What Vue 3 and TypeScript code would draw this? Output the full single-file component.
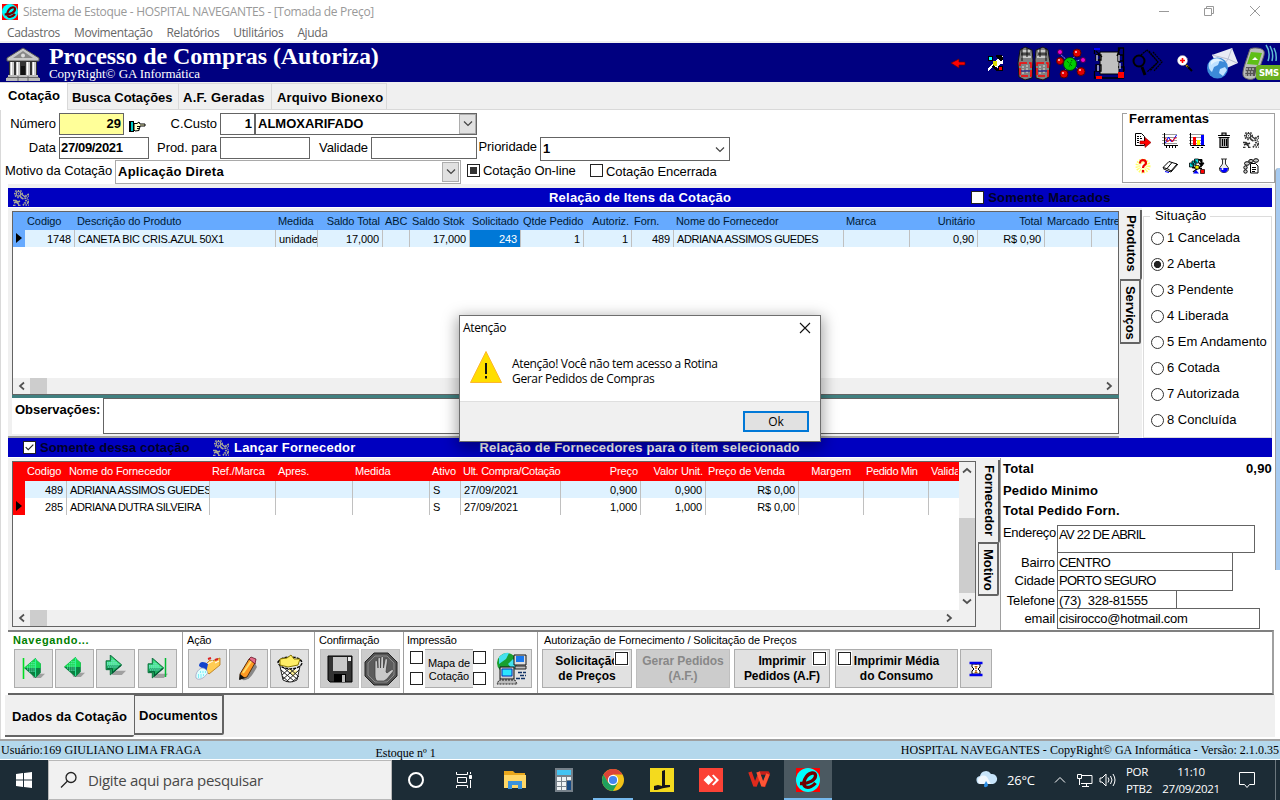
<script setup lang="ts">
interface Column {
  label: string
  values: string[]
  right?: boolean
  headRight?: boolean
  selected?: boolean
}

const menus: string[] = ['Cadastros', 'Movimentação', 'Relatórios', 'Utilitários', 'Ajuda']
const topTabs: string[] = ['Cotação', 'Busca Cotações', 'A.F. Geradas', 'Arquivo Bionexo']

const itemColumns: Column[] = [
  { label: 'Codigo', values: ['1748'], right: true },
  { label: 'Descrição do Produto', values: ['CANETA BIC CRIS.AZUL 50X1'] },
  { label: 'Medida', values: ['unidade'] },
  { label: 'Saldo Total', values: ['17,000'], right: true, headRight: true },
  { label: 'ABC', values: [''] },
  { label: 'Saldo Stok', values: ['17,000'], right: true, headRight: true },
  { label: 'Solicitado', values: ['243'], right: true, headRight: true, selected: true },
  { label: 'Qtde Pedido', values: ['1'], right: true, headRight: true },
  { label: 'Autoriz.', values: ['1'], right: true, headRight: true },
  { label: 'Forn.', values: ['489'], right: true },
  { label: 'Nome do Fornecedor', values: ['ADRIANA ASSIMOS GUEDES'] },
  { label: 'Marca', values: [''] },
  { label: 'Unitário', values: ['0,90'], right: true, headRight: true },
  { label: 'Total', values: ['R$ 0,90'], right: true, headRight: true },
  { label: 'Marcado', values: [''] },
  { label: 'Entre', values: [''] },
]

const supplierColumns: Column[] = [
  { label: 'Codigo', values: ['489', '285'], right: true },
  { label: 'Nome do Fornecedor', values: ['ADRIANA ASSIMOS GUEDES', 'ADRIANA DUTRA SILVEIRA'] },
  { label: 'Ref./Marca', values: ['', ''] },
  { label: 'Apres.', values: ['', ''] },
  { label: 'Medida', values: ['', ''] },
  { label: 'Ativo', values: ['S', 'S'] },
  { label: 'Ult. Compra/Cotação', values: ['27/09/2021', '27/09/2021'] },
  { label: 'Preço', values: ['0,900', '1,000'], right: true, headRight: true },
  { label: 'Valor Unit.', values: ['0,900', '1,000'], right: true, headRight: true },
  { label: 'Preço de Venda', values: ['R$ 0,00', 'R$ 0,00'], right: true },
  { label: 'Margem', values: ['', ''], headRight: true },
  { label: 'Pedido Min', values: ['', ''] },
  { label: 'Valida', values: ['', ''] },
]

const situations: string[] = [
  '1 Cancelada', '2 Aberta', '3 Pendente', '4 Liberada',
  '5 Em Andamento', '6 Cotada', '7 Autorizada', '8 Concluída',
]
const currentSituation = 1
</script>

<template>
  <div class="window">
    <svg class="defs" width="0" height="0">
      <symbol id="gears" viewBox="0 0 16 16">
        <g fill="none" stroke="currentColor">
          <circle cx="5.500" cy="3.800" r="3.700" stroke-width="1.600" stroke-dasharray="1.500 1.200" />
          <circle cx="5.500" cy="3.800" r="2.300" stroke-width="1.200" />
          <circle cx="5.500" cy="3.800" r=".7" fill="currentColor" stroke="none" />
          <path d="M16 4.500c-5 0-5 7.500 0 7.500" stroke-width="1.800" stroke-dasharray="1.600 .900" />
          <path d="M16 6.500c-2.500 0-2.500 3.500 0 3.500" />
          <path d="M9.500 5l3 2M8 7.500l2.500 1.500" stroke-width="1.500" />
          <path d="M0 10.500h3l2 1.500 2-1M1 13l2-1 3 2.500M0 15.500h2.500M5 15.500h2.500" stroke-width="1.500" />
          <path d="M10 15.500l1.500-2.500h3l1.500 2.500M12.500 15h1.500" stroke-width="1.500" stroke-dasharray="1.800 .800" />
        </g>
      </symbol>
      <symbol id="logo-e" viewBox="0 0 24 24">
        <rect width="24" height="24" fill="#f00" />
        <circle cx="12" cy="12" r="12" fill="#0ff" />
        <path fill="none" stroke="#700000" stroke-width="3.400" d="M4 15.500c9 .500 15.500-3.500 15.500-8 0-4-6-3-9 1-3 4-4 9-.500 10.500 3 1 7-1 9.500-4" />
      </symbol>
      <symbol id="arrow-right" viewBox="0 0 20 20">
        <path d="M6 15h14l-4 4H7z" fill="#a0a0a0" />
        <path d="M1 5.500h4V0l11 9.500L5 19v-5H1z" fill="#20b060" stroke="#063" stroke-width=".8" />
        <path d="M6 2l9 7.500H2V6.500h4z" fill="#48e888" />
        <path d="M2 7.500h9M2 9.500h12M6 5.500h3M3 11.500h9" fill="none" stroke="#8de" stroke-dasharray="1 1" />
        <path d="M2 13h5v4l8-7" stroke="#053" fill="none" />
      </symbol>
      <symbol id="arrow-left" viewBox="0 0 20 20">
        <path d="M7 15h13l-4 4H9z" fill="#a0a0a0" />
        <path d="M0 9.500L11 0l1 2 4 3.500V14l-5 5z" fill="#0a8040" />
        <path d="M0 9.500L11 0l1 2 4 3.500v4z" fill="#18d850" />
        <path d="M3 8.500h8M5 6.500h6M7 4.500h4M3 10.500h8M5 12.500h6" stroke="#8fd" stroke-dasharray="1 1" />
        <path d="M11 1v17" stroke="#3fa" stroke-width=".8" />
      </symbol>
    </svg>

    <header class="caption">
      <svg class="app-icon" viewBox="0 0 24 24"><use href="#logo-e" /></svg>
      <span class="caption-text">Sistema de Estoque - HOSPITAL NAVEGANTES - [Tomada de Preço]</span>
      <svg class="controls" width="104" height="12" fill="none" stroke="#999">
        <path d="M1 6.500h10M46.500 3.500h7v7h-7zM48.500 3.500v-2h7v7h-2M92 1l10 10M102 1L92 11" />
      </svg>
    </header>
    <nav class="menu"><span v-for="m in menus" :key="m">{{ m }}</span></nav>

    <section class="banner">
      <svg class="bank" width="34" height="34" viewBox="0 0 34 34">
        <path d="M1 11L17 1l16 10v3H1z" fill="#c8c8c8" stroke="#555" />
        <path d="M7 11l10-7 10 7z" fill="#888" />
        <circle cx="17" cy="8.500" r="2" fill="#ddd" />
        <path d="M3 14h28v15H3z" fill="#333" />
        <path d="M4 15h4v13H4zM10 15h4v13h-4zM20 15h4v13h-4zM26 15h4v13h-4z" fill="#ccc" />
        <path d="M5.500 15v13M11.500 15v13M21.500 15v13M27.500 15v13" stroke="#fff" />
        <path d="M15 19h4v9h-4z" fill="#111" />
        <path d="M2 28h30v2H2zM0 31h34v3H0z" fill="#bbb" />
        <path d="M1 30.500h32M12 29v5M22 29v5" stroke="#666" />
      </svg>
      <div class="titles">
        <h1>Processo de Compras (Autoriza)</h1>
        <p>CopyRight© GA Informática</p>
      </div>
      <svg class="banner-icons" width="332" height="39" viewBox="948 0 332 39">
        <path d="M951 20l8-4v3h6v3h-6v3z" fill="#f00" stroke="#600" stroke-width=".7" />
        <g shape-rendering="crispEdges">
          <path d="M988 28v-3l5-5 4-3 3-4h3v8h-3l-1 3h4v4h-3l-4-4-3-1-4 5z" fill="#fff" />
          <path d="M996 12h6l1 4-2 2-4-3z" fill="#000" />
          <path d="M988 13h5v5h-5z" fill="#000" /><path d="M989 14h3v3h-3z" fill="#0ff" />
          <path d="M993 18h4v5h-4z" fill="#dd0" />
          <path d="M993 22l6 6h-2l-5-4z" fill="#000" />
          <path d="M998 23h5v5h-5z" fill="#000" /><path d="M999 24h3v3h-3z" fill="#f00" />
        </g>
        <g stroke="#111">
          <path d="M1020 7l5-3 7 3 1 10-1 18-7 2-6-3-1-14z" fill="#808080" />
          <path d="M1048 7l-5-3-7 3-1 10 1 18 7 2 6-3 1-14z" fill="#808080" />
          <path d="M1022 8h8M1038 8h8M1021 14h10M1037 14h10" stroke="#c8c8c8" stroke-width="2" />
          <path d="M1022 5v13M1027 5v9M1040 5v9M1046 5v13M1021 11h9M1038 11h9" />
          <path d="M1020 20h11v13h-11zM1037 20h11v13h-11z" fill="none" stroke="#f00" stroke-width="1.500" stroke-dasharray="7 2" />
          <path d="M1023 23v9M1027 22v9M1040 23v9M1044 22v9" stroke="#ddd" stroke-dasharray="2 1" />
          <path d="M1021 28h9M1038 28h9" stroke="#008" />
        </g>
        <path d="M1059 10l11 10 7-10M1060 18l10 2 13-4M1064 30l6-10 11 8" stroke="#aaf" stroke-dasharray="2 1" fill="none" />
        <circle cx="1070" cy="21" r="6.500" fill="#0c0" stroke="#040" />
        <path d="M1067 18l5 5M1072 17l-3 7" stroke="#040" stroke-dasharray="1 1" />
        <g fill="#e00000" stroke="#500">
          <circle cx="1060" cy="18" r="3.500" /><circle cx="1077" cy="10" r="4" />
          <circle cx="1064" cy="31" r="4" /><circle cx="1081" cy="28.500" r="4" />
        </g>
        <g fill="#e0c" stroke="#404"><circle cx="1060" cy="9" r="2.500" /><circle cx="1083" cy="17" r="2.500" /></g>
        <g fill="#fcc"><circle cx="1059" cy="17" r="1" /><circle cx="1076" cy="9" r="1" /><circle cx="1063" cy="30" r="1" /><circle cx="1080" cy="27" r="1" /></g>
        <path d="M1100 9h19v22h-19z" fill="#c0c0c0" stroke="#000" />
        <g fill="none" stroke="#000" stroke-width="1.300">
          <path d="M1094.500 5v6M1094.500 28v7h29V5h-5v6M1096 12h5v5h-5zM1118 12h5v6h-5zM1096 22h5v6h-5zM1118 24h6v4M1096 8l6 6M1120 5l-3 8" />
          <path d="M1097 12v6M1119 12v6M1098 22v6M1120 20v6" stroke="#ccd" />
        </g>
        <path d="M1094 5h6v2h-6z" fill="#00f" /><path d="M1118 29h6v6h-6z" fill="#f00" /><path d="M1096 33h6v3h-6z" fill="#f00" />
        <g fill="none" stroke="#000" stroke-width="2">
          <circle cx="1139" cy="18" r="5.500" /><path d="M1142 24l3 8" stroke-width="3" />
          <path d="M1141 12l6-5 11 12-11 10M1149 8l9 11-8 9M1153 9l9 10-8 9" stroke-width="1.200" stroke-dasharray="2 .600" />
        </g>
        <path d="M1186 22l6 6" stroke="#000" stroke-width="2" />
        <path d="M1185 21l3 3" stroke="#fc0" stroke-width="2" stroke-dasharray="1 1" />
        <circle cx="1182.500" cy="17.500" r="5" fill="#fff" stroke="#99a" stroke-dasharray="1 1" />
        <path d="M1180 17.500h5M1182.500 15v5" stroke="#f00" stroke-width="1.600" />
        <path d="M1212 12l20-7 6 15-18 8z" fill="#e8ebf4" />
        <path d="M1212 12l16 4 4-11M1219 28l9-12 9 4" fill="none" stroke="#b8bfd2" />
        <circle cx="1217.500" cy="25" r="10.500" fill="#3c8ad8" />
        <path d="M1209 20c3-5 8-5 11-3l-2 5-4 2-2 5c-3-2-4-5-3-9zM1220 26l5-2 2 3-4 6-4-3z" fill="#bfe2ff" />
        <path d="M1211 18c5-5 11-2 13 1-5-2-9-1-13 3z" fill="#eaf7ff" opacity=".8" />
        <path d="M1250 6c4-2 11-1 13 1 3 2 0 8-2 14l-4 11c-2 6-10 5-13 2-2-2-1-7 1-13z" fill="#b9bdb9" stroke="#666" />
        <path d="M1251 9l11 1-4 12-11-1z" fill="#5fbf18" />
        <path d="M1252 17l3-3 3 3z" fill="#fff" />
        <path d="M1246 24h11l-2 9-10 0z" fill="#555" />
        <path d="M1246 26h9M1245 29h9M1245 32h9" stroke="#ddd" stroke-dasharray="2 1" />
        <path d="M1266 2q5 7 2 16M1270 3q4 7 2 15M1274 5q3 6 2 13" stroke="#60bcd4" fill="none" stroke-width="1.500" />
        <rect x="1256" y="22" width="26" height="15" rx="3" fill="#69b020" />
        <text x="1259" y="33" class="sms">SMS</text>
      </svg>
    </section>

    <nav class="top-tabs">
      <span v-for="(t, i) in topTabs" :key="t" :class="{ active: i === 0 }">{{ t }}</span>
    </nav>

    <main class="page">
      <div class="content">
        <section class="form">
          <div class="fields">
            <div class="row row1">
              <label>Número</label>
              <div class="box yellow num">29</div>
              <svg width="17" height="11" viewBox="0 0 17 11" class="hand">
                <path d="M0 0h5v11H0z" fill="#000" /><path d="M2 1h2v9H2z" fill="#0cc" />
                <path d="M5 2.500h3l2-1.500 1 2h5v2h-5v1.500h-.500v1.500h-.500v1.500L6 10 5 9z" fill="#ffc" stroke="#000" /><path d="M8 5.500h3M8 7.500h2.500" stroke="#000" />
              </svg>
              <label>C.Custo</label>
              <div class="box num">1</div>
              <div class="box combo"><b>ALMOXARIFADO</b><i class="drop"><svg viewBox="0 0 10 6"><path d="M1 .500l4 4 4-4" /></svg></i></div>
            </div>
            <div class="row row2">
              <label>Data</label><div class="box date">27/09/2021</div>
              <label>Prod. para</label><div class="box"></div>
              <label>Validade</label><div class="box"></div>
              <label class="prio">Prioridade</label>
              <div class="box tall">1<svg class="chev" viewBox="0 0 10 6"><path d="M1 .500l4 4 4-4" /></svg></div>
            </div>
            <div class="row row3">
              <label>Motivo da Cotação</label>
              <div class="box combo soft"><b>Aplicação Direta</b><i class="drop"><svg viewBox="0 0 10 6"><path d="M1 .500l4 4 4-4" /></svg></i></div>
              <i class="check mixed"></i><label class="l">Cotação On-line</label>
              <i class="check"></i><label class="l low">Cotação Encerrada</label>
            </div>
          </div>
          <div class="tools">
            <b>Ferramentas</b>
            <div class="tool-grid">
              <svg viewBox="0 0 16 16"><path d="M.500 1.500h6l3 3v9h-9z" fill="#fff" stroke="#000" /><path d="M2 4.500h4M2 6.500h5M2 8.500h3M2 10.500h3" stroke="#000" stroke-dasharray="2 1" /><path d="M5 9h5V5.500l6 5-6 5V12H5z" fill="#f00" stroke="#800" stroke-width=".6" /></svg>
              <svg viewBox="0 0 16 16"><path d="M0 2.500h15M0 5.500h15M0 8.500h15M0 11.500h15" stroke="#999" /><path d="M2.500 1v12.500H16M4.500 14v2M7.500 14v2M10.500 14v2M13.500 14v2" stroke="#000" fill="none" /><path d="M3.500 11l3-6 3 5 2-2 3-5" stroke="#00f" fill="none" /><path d="M3.500 6l2 4 3-3 2 3 2-4 2 0" stroke="#f00" fill="none" /></svg>
              <svg viewBox="0 0 16 16"><path d="M0 2.500h15M0 5.500h15M0 8.500h15M0 11.500h15" stroke="#999" /><path d="M1.500 1v12.500H16M3 15.500h2M8 15.500h2M12 15.500h2" stroke="#000" fill="none" /><path d="M4 5h3v8H4z" fill="#f00" /><path d="M8 8h3v5H8z" fill="#ff0" /><path d="M12 3h3v10h-3z" fill="#00f" /></svg>
              <svg viewBox="0 0 16 16"><path d="M2 3.500h12M6 3V1h4v2M2.500 5.500h11M4 6v9.500h8V6" stroke="#000" stroke-width="1.200" fill="#aaa" /><path d="M6.500 7v7M8.500 7v7M10.500 7v7" stroke="#000" /></svg>
              <svg viewBox="0 0 16 16" class="dark-gears"><use href="#gears" width="16" height="16" /></svg>
              <svg viewBox="0 0 16 16"><circle cx="8" cy="8" r="5" fill="none" stroke="#ff6" stroke-width="5" stroke-dasharray="1 1" /><path d="M5 5.500c0-5 6-4 6-.500 0 2-3 2-3 5M8 12v2.500" stroke="#e00" stroke-width="2.200" fill="none" /></svg>
              <svg viewBox="0 0 16 16"><path d="M1 9.500l6-6 3 1 5 1.500-6 7-3-2z" fill="#fff" stroke="#000" /><path d="M10 4.500L5 10.500M1 10.500l5 2.500 3 1 7-8" stroke="#000" fill="none" /><path d="M3 13.500l4 1" stroke="#00f" /></svg>
              <svg viewBox="0 0 16 16"><path d="M9 1.500h4v4M10 5h5l-2.500 3.500z" fill="#000" stroke="#000" /><g fill="#0dd" stroke="#000" stroke-width=".8"><path d="M5.500 1h4v4h-4zM3 3h4v4H3zM.500 5h4v4h-4z" /></g><path d="M3 9.500l10 1M12 8l-8 6" stroke="#000" stroke-width="1.500" /><path d="M6 7.500h4v3.500H6z" fill="#ee0" stroke="#000" stroke-width=".7" /><path d="M11.500 11.500h4v4h-4z" fill="#f00" stroke="#000" stroke-width=".7" /><path d="M4 15.500l3-3.500 3 3.500z" fill="#00f" /></svg>
              <svg viewBox="0 0 16 16"><path d="M5 1h6M6.500 1v5L3.500 10c-1 6 10 6 9 0L9.500 6V1" fill="#eee" stroke="#333" /><path d="M4 10h8c0 6-8 6-8 0z" fill="#00f" /><circle cx="6.500" cy="11" r="1" fill="#fff" /></svg>
              <svg viewBox="0 0 16 16"><path d="M7.500 5.500h5l2.500 2.500v7H7.500zM9 9.500h4M9 11.500h4M9 13.500h3" fill="#fff" stroke="#000" /><g fill="#ccc" stroke="#000"><ellipse cx="4" cy="5.500" rx="2.500" ry="1.800" /><circle cx="2.500" cy="9.500" r="1.700" /><circle cx="2.500" cy="13.500" r="1.700" /><ellipse cx="8" cy="3" rx="2.300" ry="1.500" /><ellipse cx="13" cy="2.500" rx="2.500" ry="1.800" /></g></svg>
            </div>
          </div>
        </section>

        <div class="bar bar1">
          <svg class="bar-gears" viewBox="0 0 16 16"><use href="#gears" width="16" height="16" /></svg>
          <b>Relação de Itens da Cotação</b>
          <span class="only"><i class="check"></i>Somente Marcados</span>
        </div>

        <section class="upper">
          <div class="upper-left">
            <div class="grid items">
              <div class="gr head">
                <span></span>
                <span v-for="c in itemColumns" :key="c.label" :class="{ r: c.headRight }">{{ c.label }}</span>
              </div>
              <div class="gr data">
                <span class="ind"><i></i></span>
                <span v-for="c in itemColumns" :key="c.label" :class="{ r: c.right, sel: c.selected }">{{ c.values[0] }}</span>
              </div>
              <div class="fill"></div>
              <div class="hscroll">
                <svg width="17" height="16" viewBox="0 0 17 16"><path d="M11 4.500L7 8l4 3.500" /></svg><i></i>
                <svg width="17" height="16" viewBox="0 0 17 16"><path d="M6 4.500L10 8l-4 3.500" /></svg>
              </div>
            </div>
            <div class="teal"></div>
            <div class="obs"><b>Observações:</b><div></div></div>
          </div>
          <div class="side side1"><span class="on">Produtos</span><span>Serviços</span></div>
          <div class="situation">
            <div class="group">
              <span class="legend">Situação</span>
              <div v-for="(s, i) in situations" :key="s" class="radio"><i :class="{ on: i === currentSituation }"></i>{{ s }}</div>
            </div>
          </div>
        </section>

        <div class="bar bar2">
          <span class="only2"><i class="check"><svg viewBox="0 0 13 13"><path d="M2 6l3 3 6-6" /></svg></i>Somente dessa cotação</span>
          <svg class="bar-gears" viewBox="0 0 16 16"><use href="#gears" width="16" height="16" /></svg>
          <b>Lançar Fornecedor</b>
          <b class="rel">Relação de Fornecedores para o item selecionado</b>
        </div>

        <section class="lower">
          <div class="grid suppliers">
            <div class="sup-main">
              <div class="sup-table">
                <div class="gr head">
                  <span></span>
                  <span v-for="c in supplierColumns" :key="c.label" :class="{ r: c.headRight }">{{ c.label }}</span>
                </div>
                <div v-for="n in 2" :key="n" class="gr data" :class="{ plain: n === 2 }">
                  <span class="ind"><i v-if="n === 2"></i></span>
                  <span v-for="c in supplierColumns" :key="c.label" :class="{ r: c.right }">{{ c.values[n - 1] }}</span>
                </div>
              </div>
              <div class="vscroll">
                <svg width="16" height="17" viewBox="0 0 16 17"><path d="M4 10.500L8 7l4 3.500" /></svg><i></i>
                <svg width="16" height="17" viewBox="0 0 16 17"><path d="M4 6.500L8 10l4-3.500" /></svg>
              </div>
            </div>
            <div class="hscroll">
              <svg width="17" height="16" viewBox="0 0 17 16"><path d="M11 4.500L7 8l4 3.500" /></svg><i></i>
              <svg width="17" height="16" viewBox="0 0 17 16"><path d="M6 4.500L10 8l-4 3.500" /></svg>
            </div>
          </div>
          <div class="side side2"><span class="on">Fornecedor</span><span>Motivo</span></div>
          <div class="details">
            <div class="total"><b>Total</b><b>0,90</b></div>
            <b class="t2">Pedido Minimo</b>
            <b class="t3">Total Pedido Forn.</b>
            <div class="addr first"><label>Endereço</label><div class="f street">AV 22 DE ABRIL</div></div>
            <div class="addr"><label>Bairro</label><div class="f bai">CENTRO</div></div>
            <div class="addr"><label>Cidade</label><div class="f cid">PORTO SEGURO</div></div>
            <div class="addr"><label>Telefone</label><div class="f tel">(73)&nbsp; 328-81555</div></div>
            <div class="addr"><label>email</label><div class="f ema">cisirocco@hotmail.com</div></div>
          </div>
        </section>

        <section class="toolbar">
          <div class="tg g1">
            <b class="nav-label">Navegando...</b>
            <div class="btns">
              <button><svg width="23" height="23" viewBox="0 0 23 23"><use href="#arrow-left" x="2" y="1" width="21" height="21" /><path d="M1.500 1v21" stroke="#0d2" stroke-width="1.600" /></svg></button>
              <button><svg width="21" height="23"><use href="#arrow-left" width="21" height="21" /></svg></button>
              <button><svg width="22" height="27"><use href="#arrow-right" width="21" height="21" /></svg></button>
              <button><svg width="22" height="23" viewBox="0 0 22 23"><use href="#arrow-right" width="21" height="21" y="1" /><path d="M18.500 1v19" stroke="#0b3" stroke-width="1.500" /></svg></button>
            </div>
          </div>
          <div class="tg g2">
            <span>Ação</span>
            <div class="btns">
              <button><svg width="27" height="26" viewBox="0 0 27 26"><path d="M11 9l5-5 2 1 8-3v7L15 18l-3-3z" fill="#fc5" stroke="#a60" stroke-width=".7" /><path d="M13 8l6-3M21 7l4-2" stroke="#fff" /><path d="M14 3l3-1M21 4l3-1" stroke="#d22" stroke-width="2" /><path d="M5 10c0-5 5-5 9-2l-2 9c-2-4-4-5-7-7z" fill="#14c" /><path d="M2 22c-1-5 3-10 7-10 3 1 6 4 4 6-3 4-8 7-11 4z" fill="#dfffff" stroke="#99b" stroke-width=".7" /><path d="M4 19h7M4 21h5M6 16h6" stroke="#2de" stroke-dasharray="1 1.500" /></svg></button>
              <button><svg width="24" height="26" viewBox="0 0 24 26"><path d="M5 24c7 1 10-4 15-13l-2-4z" fill="#888" /><path d="M3 18L12 3l6 4-8 14-7 2z" fill="#f92" stroke="#531" /><path d="M6 17L15 4" stroke="#fd6" stroke-width="2" /><path d="M3 18l5 4-6 2z" fill="#111" /><path d="M12 3l2-2 5 2-1 5z" fill="#e46b88" stroke="#501" stroke-width=".7" /></svg></button>
              <button><svg width="28" height="31" viewBox="0 0 28 31"><path d="M4 13l3 14q7 4 14 0l3-14z" fill="#fff" /><path d="M12 16l5 8 5-6z" fill="#fe7" opacity=".8" /><path d="M4 13l3 14q7 4 14 0l3-14M5 17l13 11M6 23l7 6M8 15l13 11M13 15l9 8M23 17L10 29M23 23l-7 6M20 15L7 26M14 15l-8 7" fill="none" stroke="#222" /><path d="M2 9q4-5 12-5 11 0 12 6c-2 8-22 8-24-1z" fill="#e4e4e4" stroke="#000" stroke-width="1.400" stroke-dasharray="3 1" /><path d="M4 6l7-1 4-3 3 4 6 0-2 6-10 2-8-2z" fill="#fe6" stroke="#870" /></svg></button>
            </div>
          </div>
          <div class="tg g3">
            <span>Confirmação</span>
            <div class="btns">
              <button class="dis"><svg width="26" height="28" viewBox="0 0 26 28"><path d="M1 1h24v26H3l-2-2z" fill="#333" stroke="#000" /><path d="M6 2h14v14H6z" fill="#c8c8c8" /><path d="M7 19h12v8H7z" fill="#000" /><path d="M15 20h3v7h-3z" fill="#bbb" /><path d="M21 2h3v4h-3z" fill="#eee" /></svg></button>
              <button class="dis"><svg width="34" height="34" viewBox="0 0 34 34"><path d="M10 1h14l9 9v14l-9 9H10l-9-9V10z" fill="#555" stroke="#222" /><path d="M11 4h12l7 7v12l-7 7H11l-7-7V11z" fill="#5c5c5c" stroke="#999" stroke-width=".8" /><path d="M13 29c-2-2-2-4-2-7V10c0-2 2-2 2.500 0L14 16V7c0-2 2.500-2 2.500 0V16l.500-10c0-2 2.500-2 2.500 0V16l1.500-8c0-2 2.500-1.500 2.500 0L22 20l1 1 4-3c2-1 3 0 2 1.500L23 27l-3 2z" fill="#c9c9c9" stroke="#3a3a3a" stroke-width=".7" /></svg></button>
            </div>
          </div>
          <div class="tg g4">
            <span>Impressão</span>
            <div class="btns">
              <div class="map"><div class="cks"><i class="check"></i><i class="check"></i></div><div class="maptext">Mapa de<br />Cotação</div><div class="cks last"><i class="check"></i><i class="check"></i></div></div>
              <button><svg width="33" height="33" viewBox="0 0 33 33"><circle cx="11" cy="11" r="10" fill="#18a030" /><path d="M3 5q6-5 10-4l-3 6-7 5zM12 12l5-5 4 4-3 8z" fill="#45e0ef" /><path d="M18 3h12v10H18z" fill="#ddd" stroke="#111" /><path d="M20 4h8v6h-8z" fill="#1878ee" /><path d="M19 14h11v3H19z" fill="#bbb" stroke="#222" /><path d="M4 15h14v12H4z" fill="#ccc" stroke="#111" /><path d="M6 17h10v7H6z" fill="#2ce5ff" stroke="#03b" /><path d="M3 28h16l2 4H1z" fill="#bbb" stroke="#222" stroke-dasharray="2 1" /><path d="M22 20.500h8M24 23.500h6M20 26.500h10" stroke="#136" stroke-width="1.300" stroke-dasharray="4 1" /></svg></button>
            </div>
          </div>
          <div class="tg g5">
            <span>Autorização de Fornecimento / Solicitação de Preços</span>
            <div class="btns">
              <button class="txt b1"><span>Solicitação<br />de Preços</span><i class="check"></i></button>
              <button class="txt b2 dis">Gerar Pedidos<br />(A.F.)</button>
              <button class="txt b3"><span>Imprimir<br />Pedidos (A.F)</span><i class="check"></i></button>
              <button class="txt b4"><span>Imprimir Média<br />do Consumo</span><i class="check left"></i></button>
              <button class="b5"><svg width="14" height="16" viewBox="0 0 14 16"><path d="M3 3h8v3L9 8l2 2v3H3v-3l2-2-2-2z" fill="#fff" stroke="#000" /><path d="M5 5h4L7 8zM7 9l2 3H5z" fill="#da3" /><path d="M7 3v10" stroke="#700" stroke-dasharray="1 1" /><path d="M.500 2h13M.500 14h13" stroke="#00e" stroke-width="2.600" /></svg></button>
            </div>
          </div>
        </section>

        <nav class="bottom-tabs"><span class="on">Dados da Cotação</span><span>Documentos</span></nav>
      </div>
      <div class="edge"></div>
    </main>

    <div class="status">
      <span>Usuário:169 GIULIANO LIMA FRAGA</span>
      <span class="stock">Estoque nº 1</span>
      <span class="ver">HOSPITAL NAVEGANTES - CopyRight© GA Informática - Versão: 2.1.0.35</span>
    </div>

    <footer class="taskbar">
      <div class="start"><svg width="16" height="16" viewBox="0 0 16 16"><path fill="#fff" d="M0 2l7-1v6.500H0zM8 .900L16 0v7.500H8zM0 8.500h7V15l-7-1zM8 8.500h8V16l-8-.900z" /></svg></div>
      <div class="search">
        <svg width="18" height="18" viewBox="0 0 18 18" fill="none" stroke="#222" stroke-width="1.300"><circle cx="11" cy="6.500" r="5" /><path d="M7.500 10L1 16.500" /></svg>
        <span>Digite aqui para pesquisar</span>
      </div>
      <div class="apps">
        <div><svg width="18" height="18"><circle cx="9" cy="9" r="7" fill="none" stroke="#fff" stroke-width="2" /></svg></div>
        <div class="tv"><svg width="17" height="16" viewBox="0 0 17 16" fill="none" stroke="#fff"><path d="M.500 0v2.500h11V0M.500 16v-2.500h11V16M1.500 5.500h9v5h-9zM14.500 0v2M14.500 8v8" /><path d="M13.500 3.500h2v3h-2z" fill="#fff" /></svg></div>
        <div><svg width="22" height="20" viewBox="0 0 22 20"><path d="M0 1h9l2 2h10v15H0z" fill="#e9a71c" /><path d="M0 5h22v13H0z" fill="#ffd766" /><path d="M4 11h14v8h-4v-4H8v4H4z" fill="#3a92dc" /></svg></div>
        <div><svg width="18" height="24" viewBox="0 0 18 24"><path d="M0 0h18v24H0z" fill="#76818a" /><path d="M2 2h14v5H2z" fill="#44c4f2" /><path d="M2 9h4v4H2zM7 9h4v4H7zM12 9h4v3h-4zM2 14h4v4H2zM7 14h4v4H7zM2 19h4v3H2zM7 19h4v3H7z" fill="#eef2f4" /><path d="M12 13h4v9h-4z" fill="#174a83" /></svg></div>
        <div class="open"><svg width="22" height="22" viewBox="0 0 22 22"><circle cx="11" cy="11" r="11" fill="#f2c218" /><path d="M1.500 5.500A11 11 0 0 1 20.500 5.500H11L6.200 13.800z" fill="#dc4437" /><path d="M1.500 5.500A11 11 0 0 0 11 22l4.800-8.300H6.200z" fill="#1fa15d" /><circle cx="11" cy="11" r="5.200" fill="#fff" /><circle cx="11" cy="11" r="4.100" fill="#4586f0" /></svg></div>
        <div><svg width="24" height="24" viewBox="0 0 24 24"><path d="M0 0h24v24H0z" fill="#f4da1e" /><path d="M12 3l3-1v15h5v2q-8 1-13 3H4v-4l4-1 4 1z" fill="#17151a" /></svg></div>
        <div><svg width="24" height="24" viewBox="0 0 24 24"><path d="M0 0h24v24H0z" fill="#fb4236" /><path d="M9.500 7l5 5-5 5-5-5zM13 7.500l1.500-1 5.500 5.500-5.500 5.500-1.500-1 4-4.500z" fill="#fff" /></svg></div>
        <div><svg width="23" height="18" viewBox="0 0 23 18" fill="none" stroke-width="3.600" stroke-linejoin="bevel"><path d="M11 2h9.500L15.500 15.500" stroke="#c8201a" /><path d="M2 1l5 14 4-10" stroke="#e02a1c" /><path d="M10 1l5 14 5-12" stroke="#ff5535" /></svg></div>
        <div class="open current"><svg width="24" height="24" viewBox="0 0 24 24"><use href="#logo-e" width="24" height="24" /></svg></div>
      </div>
      <div class="tray">
        <svg width="22" height="18" viewBox="0 0 22 18"><path d="M5 13a4 4 0 0 1-1-8 6 6 0 0 1 11-2 5 5 0 0 1 2 10z" fill="#c7e4fa" /><path d="M4 13a4 4 0 0 1 0-7 5 5 0 0 1 7 0l4 7z" fill="#f1f8fe" /><path d="M10 10q4 5 0 6t0-6z" fill="#2c8ee5" /></svg>
        <span class="temp">26°C</span>
        <svg class="up" width="12" height="8" fill="none" stroke="#fff"><path d="M1 6.500l5-5 5 5" /></svg>
        <svg class="net" width="17" height="15" viewBox="0 0 17 15" fill="none" stroke="#fff"><path d="M5 2.500h11v8H5M10.500 11v3M6 13.500h7M1.500 1.500h4v4h-4zM3.500 6v6" /></svg>
        <svg class="snd" width="18" height="14" viewBox="0 0 18 14" fill="none" stroke="#fff"><path d="M1 5h2l4-4v12L3 9H1zM9 4.500q2 2.500 0 5M11.500 3q3 4 0 8M14 1q4 6 0 12" /></svg>
        <span class="two lang">POR<br />PTB2</span>
        <span class="two clock">11:10<br />27/09/2021</span>
        <svg class="msg" width="18" height="18" viewBox="0 0 18 18" fill="none" stroke="#fff"><path d="M1.500 1.500h15v12h-5l-2.500 3-2.500-3h-5z" /></svg>
        <i></i>
      </div>
    </footer>

    <div class="dialog" role="alertdialog">
      <div class="dlg-title">Atenção<svg width="12" height="12" stroke="#111" stroke-width="1.100"><path d="M1 1l10 10M11 1L1 11" /></svg></div>
      <div class="dlg-body">
        <svg width="32" height="32" viewBox="0 0 32 32"><path d="M16 .500L31.500 31.500H.500z" fill="#ffde00" stroke="#fdb62d" /><path d="M16 12v11" stroke="#111" stroke-width="2" /><path d="M15 25h2v2.500h-2z" fill="#111" /></svg>
        <p>Atenção! Você não tem acesso a Rotina<br />Gerar Pedidos de Compras</p>
      </div>
      <div class="dlg-foot"><button>Ok</button></div>
    </div>
  </div>
</template>

<style>
html, body { margin: 0; background: #fff; overflow: hidden; }
</style>

<style scoped>
.window { position: relative; width: 1280px; height: 800px; overflow: hidden; display: flex; flex-direction: column; background: #fff; color: #000; font: 13px/16px "Liberation Sans", Arial, sans-serif; }
.window * { box-sizing: border-box; }
.defs { position: absolute; }
i { font-style: normal; display: block; }
svg { display: block; flex: none; }
span, label, b { white-space: nowrap; }
button { font: inherit; color: inherit; padding: 0; margin: 0; border: 1px solid #adadad; background: #e1e1e1; }

.caption { height: 23px; flex: none; display: flex; align-items: center; padding-left: 2px; color: #999; font: 12px/16px "Open Sans", "Noto Sans", sans-serif; }
.app-icon { width: 16px; height: 16px; }
.caption-text { margin-left: 5px; letter-spacing: -.32px; }
.controls { margin: 0 18px 2px auto; }
.menu { height: 20px; flex: none; display: flex; align-items: center; padding: 1px 0 0 7px; gap: 14px; border-bottom: 2px solid #f0f0f0; color: #666; font: 12px/16px "Open Sans", "Noto Sans", sans-serif; letter-spacing: -.35px; }

.banner { height: 39px; flex: none; background: #000080; color: #fff; display: flex; font-family: "Liberation Serif", serif; }
.bank { margin: 4px 9px 0 6px; }
.titles h1 { margin: 1px 0 0; font-size: 24px; line-height: 25px; letter-spacing: -.08px; white-space: nowrap; }
.titles p { margin: 0; font-size: 13px; line-height: 10px; letter-spacing: -.05px; }
.banner-icons { margin-left: auto; }
.sms { font: bold 8.5px "DejaVu Sans", sans-serif; fill: #fff; letter-spacing: -.3px; }

.top-tabs { height: 28px; flex: none; display: flex; align-items: flex-end; background: #f0f0f0; border-bottom: 1px solid #d9d9d9; font-weight: bold; }
.top-tabs span { height: 26px; line-height: 27px; padding: 0 5px 0 4px; border: 1px solid #d9d9d9; border-left: 0; border-bottom: 0; width: 93px; letter-spacing: .25px; }
.top-tabs span:nth-child(2) { width: 111px; letter-spacing: -.05px; }
.top-tabs span:nth-child(4) { width: 115px; padding-left: 5px; letter-spacing: .15px; }
.top-tabs .active { width: 68px; height: 28px; margin-bottom: -1px; padding-left: 8px; background: #fff; line-height: 26px; letter-spacing: .1px; }

.page { height: 629px; flex: none; display: flex; }
.content { width: 1275px; border-left: 1px solid #d9d9d9; padding-left: 4px; display: flex; flex-direction: column; }
.edge { width: 5px; height: 402px; margin-top: 58px; background: #a6caf0; border-left: 1px solid #a0a0a0; border-radius: 4px 0 0 0; }
.form { height: 74px; flex: none; display: flex; }
.fields { width: 1117px; padding-top: 3px; }
.row { display: grid; height: 24px; }
.row1 { grid-template-columns: 54px 65px 26px 70px 35px 222px; }
.row2 { grid-template-columns: 54px 90px 71px 90px 61px 106px 63px 190px; }
.row3 { grid-template-columns: 110px 346px 6px 13px 110px 13px 130px; margin-top: -1px; }
.row3 > :nth-child(3) { grid-column: 4; }
.row label { line-height: 22px; text-align: right; padding-right: 3px; letter-spacing: -.08px; }
.row2 label { padding-right: 3px; letter-spacing: -.08px; }
.row .prio { padding-right: 3px; line-height: 20px; }
.row3 label.l { text-align: left; padding-left: 3px; }
.row3 label.low { line-height: 23px; }
.row3 .check { margin-top: 4px; }
.box { height: 22px; border: 1px solid #646464; background: #fff; font-weight: bold; line-height: 20px; padding: 0 2px; }
.box.num { text-align: right; }
.yellow { background: #ffff99; }
.date { letter-spacing: -.35px; padding-left: 1px; }
.hand { margin: 8px 0 0 5px; }
.tall { height: 24px; line-height: 22px; display: flex; justify-content: space-between; }
.combo { display: flex; justify-content: space-between; padding-right: 0; margin-left: 0; }
.combo.soft { height: 24px; border-color: #a9a9a9; line-height: 22px; letter-spacing: .25px; }
.drop { width: 17px; height: 20px; border: 1px solid #adadad; background: #e1e1e1; display: flex; align-items: center; justify-content: center; }
.soft .drop { margin: 1px; }
.drop svg, .chev { width: 10px; height: 6px; fill: none; stroke: #444; stroke-width: 1.2; }
.chev { margin: 9px 2px 0 0; }
.check { width: 13px; height: 13px; border: 1px solid #222; background: #fff; flex: none; }
.check.mixed { border-color: #222; background: linear-gradient(#333, #333) center / 7px 7px no-repeat #fff; }

.tools { width: 153px; height: 70px; margin-top: 3px; border: 1px solid #a0a0a0; }
.tools b { display: block; width: 82px; margin: -3px 0 0 4px; padding-left: 2px; background: #fff; line-height: 16px; letter-spacing: .2px; }
.tool-grid { display: grid; grid-template-columns: repeat(5, 27px); grid-auto-rows: 26px; padding: 5px 0 0 12px; }
.tool-grid svg { width: 16px; height: 16px; fill: none; }
.dark-gears { color: #333; }

.bar { height: 19px; flex: none; background: #0000c0; color: #fff; display: flex; align-items: center; margin: 0 3px 0 3px; width: 1264px; font-weight: bold; letter-spacing: .22px; }
.bar1 { height: 23px; border-top: 4px solid #f0f0f0; }
.bar-gears { width: 16px; height: 16px; color: #a8a898; }
.bar1 .bar-gears { margin-left: 5px; }
.bar1 b { margin-left: 520px; }
.only, .only2 { color: #000028; display: flex; align-items: center; gap: 4px; }
.only { margin-left: 240px; letter-spacing: .2px; }
.only2 { margin-left: 15px; width: 190px; letter-spacing: .08px; }
.only2 svg { fill: none; stroke: #222; stroke-width: 1.3; }
.bar2 b { margin-left: 5px; }
.bar2 .rel { margin-left: 124px; }

.upper { height: 231px; flex: none; display: flex; background: #f0f0f0; margin-left: 3px; width: 1264px; border-top: 1px solid #fff; }
.upper-left { width: 1111px; padding: 3px 0 0 4px; border-bottom: 2px solid #a0a0a0; }
.grid { background: #fff; border: 1px solid #646464; display: flex; flex-direction: column; font-size: 11px; }
.items { height: 184px; width: 1107px; }
.gr { display: grid; flex: none; }
.items .gr { grid-template-columns: 12px 50px 201px 42px 65px 27px 60px 51px 63px 48px 42px 170px 66px 68px 67px 47px 26px; }
.suppliers .gr { grid-template-columns: 12px 42px 143px 66px 77px 77px 31px 100px 80px 65px 93px 65px 65px 29px; }
.head span, .data span { overflow: hidden; padding: 0 3px 0 2px; }
.head { height: 18px; line-height: 18px; background: #66aaff; color: #001a33; letter-spacing: -.08px; }
.items .head span:nth-child(7) { padding-right: 6px; }
.data { height: 17px; background: #dff2ff; }
.data span { line-height: 18px; padding-left: 3px; border-right: 1px solid #c0c0c0; letter-spacing: -.1px; }
.data span:last-child { border-right: 0; }
.data span:nth-child(3), .items .data span:nth-child(12) { letter-spacing: -.42px; }
.items .data span:nth-child(3) { letter-spacing: -.3px; }
.items .data span:nth-child(4) { letter-spacing: -.05px; padding-right: 0; }
.data .ind { background: #66aaff; border: 0; padding: 3px 0 0 3px; }
.ind i { width: 0; height: 0; border: 5px solid transparent; border-left: 6px solid #000; border-right: 0; }
.r { text-align: right; }
.data .sel { background: #0078d7; color: #fff; }
.fill { flex: 1; }
.hscroll { height: 16px; flex: none; background: #f0f0f0; display: flex; }
.hscroll i { width: 17px; background: #cdcdcd; }
.hscroll svg:last-child { margin-left: auto; }
.hscroll svg, .vscroll svg { fill: none; stroke: #505050; stroke-width: 1.7; }
.teal { height: 3px; width: 1107px; background: #408080; }
.obs { height: 37px; width: 1107px; display: flex; background: #fff; border-bottom: 1px solid #f0f0f0; }
.obs b { width: 91px; padding: 4px 0 0 3px; letter-spacing: -.05px; }
.obs div { flex: 1; height: 36px; border: 1px solid #646464; }

.side { width: 23px; flex: none; background: #f0f0f0; font-weight: bold; padding-top: 2px; }
.side span { display: block; writing-mode: vertical-rl; width: 21px; height: 64px; margin-left: 1px; border: 1px solid #646464; border-right-width: 2px; border-bottom-width: 2px; border-radius: 0 0 2px 0; line-height: 16px; padding: 5px 1px 0; letter-spacing: -.05px; }
.side .on { width: 22px; height: 70px; border-top: 0; border-left: 0; border-bottom-width: 1px; padding-left: 3px; }
.side2 .on { height: 83px; }
.side2 span { height: 53px; }
.situation { width: 130px; background: #fff; padding: 8px 0 0 1px; }
.group { height: 222px; border: 1px solid #dcdcdc; }
.legend { display: block; width: 60px; margin: -9px 0 1px 6px; padding-left: 5px; background: #fff; letter-spacing: .1px; }
.radio { height: 26px; display: flex; align-items: center; gap: 3px; padding-left: 7px; white-space: nowrap; }
.radio i { width: 13px; height: 13px; border: 1px solid #333; border-radius: 50%; }
.radio .on { background: radial-gradient(circle, #222 3.2px, #fff 4px); }

.lower { height: 173px; flex: none; display: flex; background: #f0f0f0; margin-left: 3px; width: 1264px; border-top: 1px solid #fff; }
.suppliers { width: 964px; height: 166px; margin: 3px 1px 0 4px; }
.sup-main { flex: 1; display: flex; }
.sup-table { width: 946px; overflow: hidden; }
.suppliers .head { background: #f00; color: #fff; height: 19px; line-height: 19px; letter-spacing: -.1px; }
.suppliers .ind { background: #f00; }
.suppliers .plain { background: #fff; }
.suppliers .gr span:nth-child(7) { padding-right: 0; }
.suppliers .head span:nth-child(8) { padding-right: 0; letter-spacing: -.28px; }
.suppliers .head span:nth-child(11) { padding-right: 0; }
.suppliers .head span:nth-child(12) { padding-right: 13px; }
.suppliers .head span:nth-child(13) { letter-spacing: -.35px; }
.suppliers .head span:nth-child(14) { padding-right: 0; }
.vscroll { width: 16px; display: flex; flex-direction: column; background: #f0f0f0; margin-left: auto; height: 148px; }
.vscroll i { height: 75px; background: #cdcdcd; margin-top: auto; }
.suppliers .hscroll svg:last-child { margin-right: 17px; }
.details { flex: 1; background: #fff; padding-left: 2px; border-left: 1px solid #a0a0a0; }
.details b { letter-spacing: .2px; }
.total { display: flex; justify-content: space-between; height: 23px; padding: 3px 0 0 0; }
.t2, .t3 { display: block; height: 20px; line-height: 20px; }
.t3 { height: 24px; }
.addr { display: flex; }
.addr label { width: 54px; height: 15px; margin-top: 3px; text-align: right; padding-right: 2px; line-height: 16px; letter-spacing: -.1px; }
.addr.first label { margin-top: 0; letter-spacing: -.35px; padding-right: 3px; }
.f { height: 19px; border: 1px solid #646464; padding-left: 1px; line-height: 19px; margin-bottom: -1px; white-space: pre; letter-spacing: -.25px; }
.street { width: 198px; height: 28px; letter-spacing: -.75px; line-height: 18px; }
.bai { width: 176px; letter-spacing: -.6px; }
.cid { width: 176px; height: 21px; letter-spacing: -.75px; }
.tel { width: 120px; }
.ema { width: 203px; height: 21px; margin-bottom: 0; }

.toolbar { height: 65px; flex: none; margin-left: 3px; width: 1266px; display: flex; background: #fff; border-top: 2px solid #808080; border-bottom: 2px solid #646464; border-right: 2px solid #a0a0a0; font-size: 11px; }
.tg { padding: 1px 0 0 4px; border-right: 1px solid #a0a0a0; }
.tg > span, .nav-label { display: block; line-height: 14px; letter-spacing: -.2px; }
.nav-label { color: #008000; letter-spacing: .65px; }
.g1 { width: 175px; padding-left: 5px; }
.g2 { width: 132px; }
.g3 { width: 89px; }
.g4 { width: 134px; padding-left: 3px; }
.g5 { border: 0; }
.g5 > span { padding-left: 2px; letter-spacing: -.12px; }
.btns { display: flex; gap: 2px; height: 39px; margin: 2px 0 0 1px; }
.btns button { width: 39px; height: 39px; flex: none; display: flex; align-items: center; justify-content: center; position: relative; }
.g1 button:last-child { margin-left: 1px; }
.btns .dis { background: #ccc; border-color: #bfbfbf; }
.map { width: 80px; display: flex; margin-right: 3px; }
.cks { width: 17px; display: flex; flex-direction: column; justify-content: space-between; padding: 2px 0 3px 2px; }
.cks.last { width: 15px; padding-left: 0; }
.maptext { width: 48px; background: #e1e1e1; text-align: center; line-height: 13px; padding-top: 7px; letter-spacing: -.1px; border-top: 1px solid #adadad; border-bottom: 1px solid #adadad; }
.g5 .btns { gap: 0; margin-left: 0; }
.btns .txt { font-weight: bold; font-size: 12px; line-height: 15px; display: block; text-align: center; padding-top: 1px; }
.btns .b1 { width: 90px; margin-right: 4px; }
.btns .b2 { width: 94px; margin-right: 4px; color: #888; letter-spacing: -.05px; }
.btns .b3 { width: 96px; margin-right: 5px; letter-spacing: -.1px; }
.btns .b4 { width: 123px; margin-right: 2px; }
.btns .b5 { width: 32px; }
.txt .check { position: absolute; right: 3px; top: 2px; box-shadow: 0 0 0 1px #fff; }
.txt .check.left { right: auto; left: 2px; }

.bottom-tabs { height: 44px; flex: none; display: flex; background: #f0f0f0; width: 1270px; font-weight: bold; border-bottom: 2px solid #fff; }
.bottom-tabs span { height: 40px; width: 90px; line-height: 40px; padding-left: 4px; border: 2px solid #646464; border-width: 1px 2px 2px 1px; border-radius: 0 0 2px 0; }
.bottom-tabs .on { width: 129px; height: 42px; line-height: 44px; padding-left: 7px; border-width: 0 0 2px 0; letter-spacing: .1px; }

.status { height: 21px; flex: none; background: #b4d8ec; border-top: 2px solid #a0a0a0; border-bottom: 1px solid #fff; display: flex; padding: 0 1px; font: 12px/18px "Liberation Serif", serif; letter-spacing: .09px; }
.stock { margin-left: 174px; padding-top: 3px; letter-spacing: 0; }
.ver { margin-left: auto; letter-spacing: .02px; }

.taskbar { height: 40px; flex: none; display: flex; background: #1c2c36; color: #fff; font-family: "Open Sans", "Noto Sans", sans-serif; }
.start { width: 48px; display: flex; align-items: center; justify-content: center; }
.search { width: 344px; background: #f1f1f1; border: 1px solid #b8b8b8; display: flex; align-items: center; padding-left: 11px; color: #484848; font-size: 15px; }
.search span { margin-left: 10px; letter-spacing: -.32px; }
.apps { display: flex; }
.apps div { width: 49px; display: flex; align-items: center; justify-content: center; }
.apps div:first-child { width: 48px; }
.apps .tv { width: 48px; margin-right: 2px; }
.apps .open { border-bottom: 2px solid #76b9ed; padding-top: 2px; margin: 0 4px 0 5px; width: 40px; }
.apps .current { width: 48px; margin: 0; background: #4b5961; }
.tray { flex: 1; display: flex; align-items: center; padding-left: 144px; font-size: 13px; }
.temp { margin-left: 9px; letter-spacing: -.2px; width: 48px; }
.up { margin-left: -1px; }
.net { margin-left: 10px; }
.snd { margin-left: 6px; }
.two { font-size: 11.5px; line-height: 17px; letter-spacing: -.35px; }
.lang { margin-left: 9px; width: 30px; }
.clock { width: 64px; margin-left: 3px; text-align: center; }
.msg { margin-left: 15px; }
.tray > i { margin-left: auto; margin-right: 4px; width: 1px; height: 40px; background: #6b777e; }

.dialog { position: absolute; left: 459px; top: 315px; width: 362px; height: 127px; border: 1px solid #6e6e6e; background: #fff; box-shadow: 0 4px 14px 2px rgba(0, 0, 0, .36); font: 12px/15px "Open Sans", "Noto Sans", sans-serif; letter-spacing: -.34px; display: flex; flex-direction: column; }
.dlg-title { height: 24px; line-height: 24px; padding: 0 9px 0 3px; display: flex; justify-content: space-between; align-items: center; }
.dlg-body { height: 61px; display: flex; padding: 11px 0 0 10px; }
.dlg-body p { margin: 5px 0 0 10px; white-space: nowrap; }
.dlg-foot { flex: 1; background: #f0f0f0; border-top: 1px solid #dfdfdf; display: flex; justify-content: flex-end; padding: 9px 11px 0 0; }
.dlg-foot button { width: 66px; height: 21px; border: 2px solid #0078d7; line-height: 15px; letter-spacing: 0; }
</style>
